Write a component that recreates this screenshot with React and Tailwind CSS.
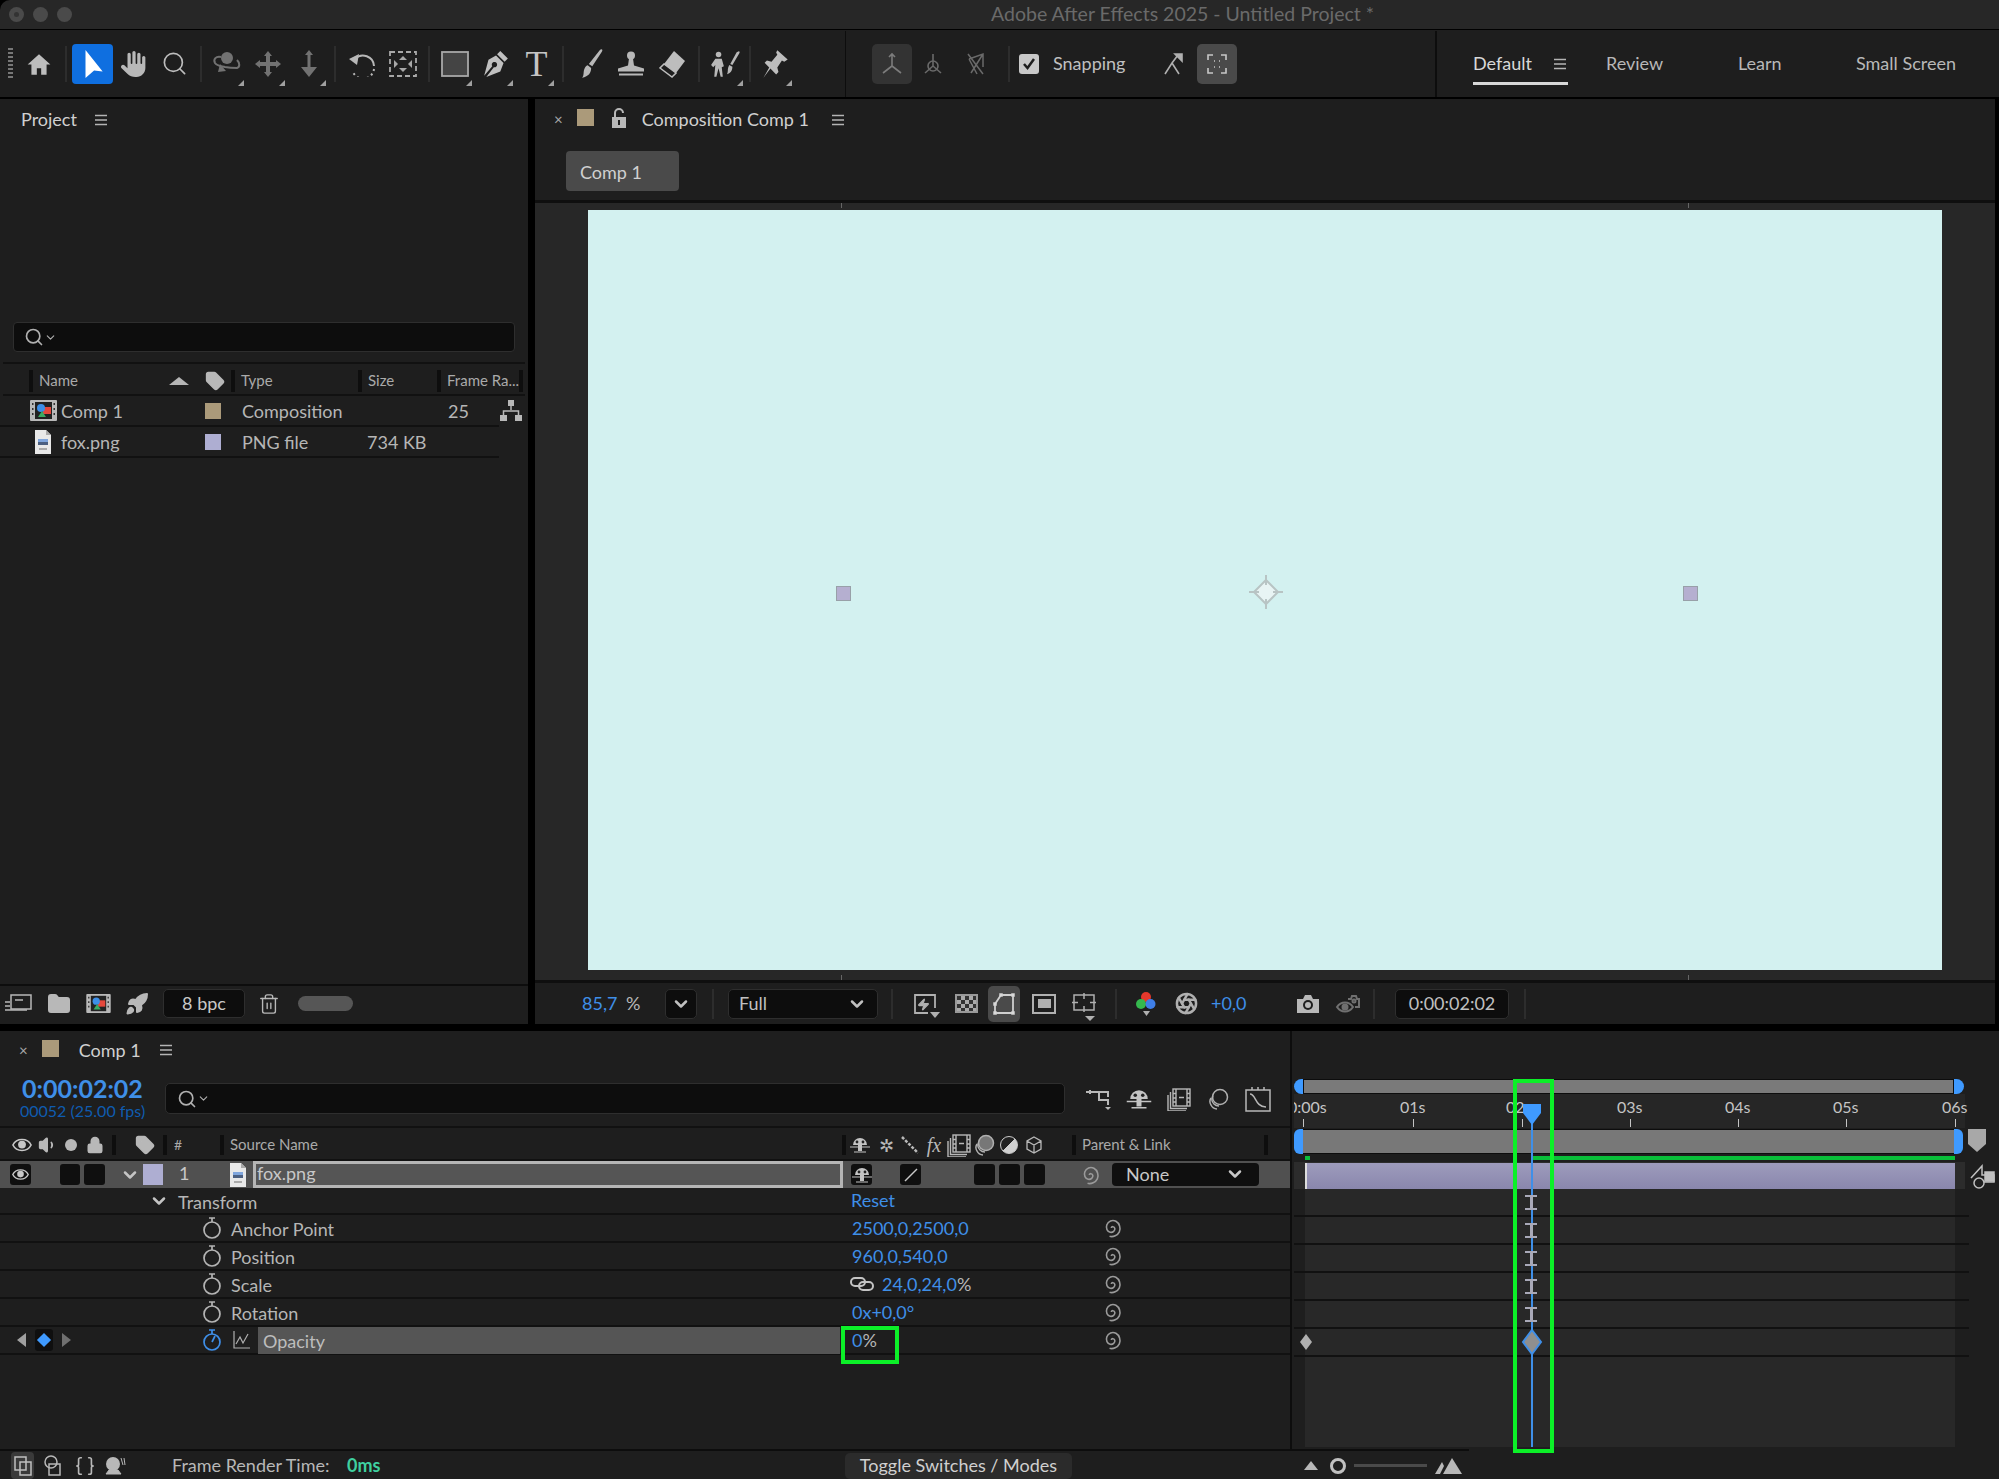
import { Search, ChevronDown, Trash2, Folder, Tag, Volume1, Zap, Rocket, Lock, Braces, Aperture } from "lucide-react";
import { FaHand } from "react-icons/fa6";

const Burger = ({ className = "" }) => (
  <svg width="14" height="12" viewBox="0 0 14 12" className={`shrink-0 ${className}`}>
    <path d="M1 1.5h12M1 6h12M1 10.5h12" stroke="#b4b4b4" strokeWidth="1.4" />
  </svg>
);

const Corner = () => <span className="absolute right-[3px] bottom-[-2px] w-0 h-0 border-l-[6px] border-l-transparent border-b-[6px] border-b-[#a0a0a0]" />;

const Tool = ({ children, corner, w = "w-[41px]" }) => (
  <div className={`relative ${w} h-[40px] flex items-center justify-center shrink-0 text-[#b8b8b8]`}>
    {children}
    {corner && <Corner />}
  </div>
);

const Sep = ({ w = "w-[13px]", h = "h-[36px]", c = "bg-[#2d2d2d]" }) => (
  <div className={`${w} flex justify-center shrink-0`}><div className={`w-[2px] ${h} ${c}`} /></div>
);

const FilmIcon = ({ w = 27, h = 21 }) => (
  <svg width={w} height={h} viewBox="0 0 27 21" className="shrink-0">
    <rect width="27" height="21" fill="#b9b9b9" rx="1" />
    <rect x="5" y="2" width="17" height="17" fill="#222" />
    <path d="M2 3h1.500v2H2zM2 8h1.500v2H2zM2 13h1.500v2H2zM23.500 3H25v2h-1.500zM23.500 8H25v2h-1.500zM23.500 13H25v2h-1.500z" fill="#333" />
    <rect x="13" y="7" width="8" height="7" fill="#e5483c" />
    <circle cx="11" cy="8" r="4" fill="#3d8fe8" />
    <path d="M12 11l4 6H8z" fill="#3cab63" />
  </svg>
);

const FileIcon = () => (
  <svg width="18" height="24" viewBox="0 0 18 24" className="shrink-0">
    <path d="M1 0h11l5 5v19H1z" fill="#e8e8e8" />
    <path d="M12 0l5 5h-5z" fill="#aaa" />
    <rect x="4" y="9" width="10" height="3" fill="#7fa5dc" />
    <rect x="4" y="12" width="10" height="3" fill="#4b5f80" />
    <rect x="5" y="18" width="8" height="2" fill="#aaa" />
  </svg>
);

const Spiral = ({ s = 22, c = "#9a9a9a" }) => (
  <svg width={s} height={s} viewBox="5 3 15 18" fill="none" stroke={c} strokeWidth="1.300" className="shrink-0">
    <path d="M12 12c0-1.500 2.500-1.500 2.800.3s-1.500 3.700-3.800 3.200-3.800-3.300-2.700-6.200 4.500-4.300 7.400-2.800 4.200 5.700 2.800 8.600-5 4.600-8 3.700" />
  </svg>
);

const Stopwatch = ({ active }) => (
  <svg width="20" height="24" viewBox="0 0 20 24" fill="none" stroke={active ? "#3f8fe8" : "#b4b4b4"} strokeWidth="1.700" className="shrink-0">
    <circle cx="10" cy="14" r="8" />
    <path d="M7 2h6M10 2v4" />
    {active && <path d="M10 14l3-6" />}
  </svg>
);

const Shy = () => (
  <svg width="20" height="18" viewBox="0 0 20 18" className="shrink-0">
    <path d="M3 9a7 7 0 0 1 14 0z" fill="#c4c4c4" />
    <circle cx="7" cy="6" r="1.400" fill="#222" /><circle cx="13" cy="6" r="1.400" fill="#222" />
    <rect x="8" y="9" width="4" height="6" fill="#c4c4c4" />
    <path d="M0 11h20M4 16h12" stroke="#c4c4c4" strokeWidth="1.200" />
  </svg>
);

const Layers = ({ fill = "none" }) => (
  <svg width="24" height="24" viewBox="0 0 24 24" fill="none" stroke="#b0b0b0" strokeWidth="1.500" className="shrink-0">
    <path d="M5 11a6.500 6.500 0 0 0 0 7 7 7 0 0 0 6 4" />
    <path d="M7 9a6.500 6.500 0 0 0 1 8 7 7 0 0 0 5 2" />
    <circle cx="14" cy="10" r="7.500" fill={fill} />
  </svg>
);

const FilmStack = () => (
  <svg width="24" height="24" viewBox="0 0 24 24" fill="none" stroke="#b8b8b8" strokeWidth="1.400" className="shrink-0">
    <rect x="6" y="2" width="17" height="17" />
    <path d="M6 6.500h3M6 11h3M6 15h3M20 6.500h3M20 11h3M20 15h3M9 2v17M20 2v17M12 10.500h5" />
    <path d="M3.500 5v16.500H20M1 8v16h18" />
  </svg>
);

const Eyeball = ({ s = 20 }) => (
  <svg width={s} height={s} viewBox="0 0 22 18" className="shrink-0">
    <path d="M1 9c4-8 16-8 20 0-4 8-16 8-20 0z" fill="none" stroke="#c8c8c8" strokeWidth="1.800" />
    <circle cx="11" cy="8.500" r="4.300" fill="#c8c8c8" />
  </svg>
);

const Chain = () => (
  <svg width="24" height="16" viewBox="0 0 24 16" fill="none" stroke="#c4c4c4" strokeWidth="2" className="shrink-0 -ml-[2px]">
    <rect x="1" y="2" width="14" height="8" rx="4" />
    <rect x="9" y="6" width="14" height="8" rx="4" />
  </svg>
);

const TabX = () => <span className="text-[15px] leading-none text-[#a8a8a8]">×</span>;
const Swatch = ({ c, border }) => <div className={`w-[17px] h-[17px] shrink-0 ${c} ${border || ""}`} />;

const Head = ({ w, label, cls = "" }) => (
  <div className={`${w} h-[22px] flex items-center shrink-0 ${cls}`}>
    <div className="w-[4px] h-[22px] bg-[#0e0e0e] mr-[6px] shrink-0" />
    <span className="text-[#aaa] text-[15px] whitespace-nowrap">{label}</span>
  </div>
);

const ProjectRow = ({ icon, name, swatch, type, size, rate, tree }) => (
  <div className="h-[31px] flex items-center border-b-2 border-[#111] w-[499px] relative">
    <div className="w-[27px]" />
    <div className="w-[32px] flex justify-center">{icon}</div>
    <div className="w-[146px] pl-[2px] pt-[2px] text-[18px] text-[#b6b6b6]">{name}</div>
    <div className={`w-[16px] h-[16px] ${swatch}`} />
    <div className="w-[21px]" />
    <div className="w-[125px] pt-[2px] text-[18px] text-[#b6b6b6]">{type}</div>
    <div className="w-[81px] pt-[2px] text-[18px] text-[#b6b6b6]">{size}</div>
    <div className="pt-[2px] text-[18px] text-[#b6b6b6]">{rate}</div>
    {tree && (
      <svg width="22" height="21" viewBox="0 0 22 21" className="absolute left-[500px] top-[4px]">
        <path d="M8 0h6v6H8zM0 15h7v6H0zM15 15h7v6h-7z" fill="#b8b8b8" />
        <path d="M11 6v4M3.500 15v-4h15v4" stroke="#b8b8b8" strokeWidth="1.500" fill="none" />
      </svg>
    )}
  </div>
);

const ViewIcon = ({ children, w = "w-[40px]" }) => <div className={`${w} h-[36px] flex items-center justify-center shrink-0 relative`}>{children}</div>;

const PropRow = ({ name, value, link = true, left, highlight, active }) => (
  <div className="h-[28px] flex items-center border-b-2 border-[#111] shrink-0">
    <div className="w-[201px] flex items-center shrink-0">{left}</div>
    <div className="w-[22px] flex justify-center shrink-0"><Stopwatch active={active} /></div>
    <div className={`flex items-center h-[27px] ${highlight ? "w-[617px]" : "w-[617px] pl-[8px]"} shrink-0`}>
      {highlight ? (
        <>
          <svg width="18" height="20" viewBox="0 0 18 20" fill="none" stroke="#b0b0b0" strokeWidth="1.200" className="ml-[10px] mr-[7px] shrink-0"><path d="M1 1v17h16M3 14l4-7 3 6 5-9" /></svg>
          <div className="bg-[#555] flex-1 h-[27px] flex items-center pl-[5px] pt-[2px] text-[18px] text-[#bdbdbd]">{name}</div>
        </>
      ) : <span className="text-[18px] text-[#b6b6b6] pt-[3px]">{name}</span>}
    </div>
    <div className="w-[261px] pl-[12px] text-[18px] shrink-0 flex items-center">{value}</div>
    {link && <Spiral />}
  </div>
);

const Blue = ({ children }) => <span className="text-[#3f8fe8]">{children}</span>;

const TimeRow = () => <div className="h-[28px] border-b-2 border-[#111] shrink-0 w-[675px]" />;

const Ibeam = ({ top }) => (
  <div className="absolute left-[233px] w-[12px] h-[15px] flex flex-col items-center" style={{ top }}>
    <div className="w-[12px] h-[2px] bg-[#a9a9b8]" />
    <div className="w-[3px] flex-1 bg-[#a9a9b8]" />
    <div className="w-[12px] h-[2px] bg-[#a9a9b8]" />
  </div>
);

const rulerLabels = [
  { label: "01s", left: 103 },
  { label: "03s", left: 320 },
  { label: "04s", left: 428 },
  { label: "05s", left: 536 },
  { label: "06s", left: 645 },
];

export default function App() {
  return (
    <div className="w-[1999px] h-[1479px] bg-black flex flex-col overflow-hidden relative font-['Lato','Liberation_Sans',sans-serif] text-[#c8c8c8]">
      {/* title bar */}
      <div className="h-[29px] bg-[#272727] flex items-center shrink-0 relative rounded-tl-[10px]">
        <div className="flex gap-[9px] pl-[9px]">
          <div className="w-[15px] h-[15px] rounded-full bg-[#4a4a4a] flex items-center justify-center"><div className="w-[5px] h-[5px] rounded-full bg-[#333]" /></div>
          <div className="w-[15px] h-[15px] rounded-full bg-[#4a4a4a]" />
          <div className="w-[15px] h-[15px] rounded-full bg-[#4a4a4a]" />
        </div>
        <div className="ml-[919px] pb-[2px] text-[19.5px] text-[#6a6a6a] whitespace-nowrap">Adobe After Effects 2025 - Untitled Project *</div>
      </div>

      {/* toolbar */}
      <div className="h-[67px] mt-[1px] bg-[#1e1e1e] flex items-center shrink-0">
        <div className="w-[18px] pl-[8px] shrink-0">
          <div className="w-[5px] h-[32px] bg-[repeating-linear-gradient(#777_0_2px,transparent_2px_4px)]" />
        </div>
        <Tool>
          <svg width="26" height="26" viewBox="0 0 24 24" fill="#bdbdbd"><path d="M12 3 1.500 12.500H5V22h5v-6h4v6h5v-9.500h3.500z" /></svg>
        </Tool>
        <Sep />
        <div className="w-[41px] h-[40px] flex items-center justify-center shrink-0 bg-[#0f6fe0] rounded-[4px]">
          <svg width="26" height="30" viewBox="0 0 24 28"><path d="M5 1l16 20-8-1-8 7z" fill="#fff" /></svg>
        </div>
        <Tool><FaHand size={26} color="#b8b8b8" /></Tool>
        <Tool><Search size={27} strokeWidth={1.500} className="text-[#bdbdbd]" /></Tool>
        <Sep w="w-[11px]" />
        <Tool corner>
          <svg width="30" height="28" viewBox="0 0 30 28" fill="none" stroke="#727272" strokeWidth="2">
            <circle cx="15" cy="8" r="6" fill="#727272" stroke="none" />
            <path d="M9 7c-5-1-8 2-6 6 2 3 6 3 10 4 5 1 9 1 12 1 3-1 3-5 0-8" />
            <path d="M8 14l-2 8 8-1z" fill="#727272" stroke="none" />
          </svg>
        </Tool>
        <Tool corner>
          <svg width="26" height="26" viewBox="0 0 26 26" fill="#727272">
            <path d="M13 0l4 5h-8zM13 26l-4-5h8zM0 13l5-4v8zM26 13l-5 4V9z" />
            <path d="M11 5h4v6h6v4h-6v6h-4v-6H5v-4h6z" />
          </svg>
        </Tool>
        <Tool corner>
          <svg width="18" height="28" viewBox="0 0 18 28" fill="#727272">
            <path d="M9 0l4 5H5zM7.500 5h3v15h-3zM1 17h16l-8 10z" />
          </svg>
        </Tool>
        <Sep w="w-[12px]" />
        <Tool>
          <svg width="28" height="26" viewBox="0 0 28 26" fill="none" stroke="#b8b8b8" strokeWidth="2">
            <path d="M7 8a11 11 0 0 1 19 7" />
            <path d="M26 18a11 11 0 0 1-21 3" strokeDasharray="2 3" />
            <path d="M1 8l10-5-2 11z" fill="#b8b8b8" stroke="none" />
          </svg>
        </Tool>
        <Tool>
          <svg width="28" height="26" viewBox="0 0 28 26" fill="#a8a8a8" stroke="none">
            <rect x="1" y="1" width="26" height="24" fill="none" stroke="#a8a8a8" strokeWidth="1.800" strokeDasharray="5 3" />
            <path d="M14 5l4 4h-8zM14 21l4-4h-8zM5 9l4 4-4 4zM23 9l-4 4 4 4z" />
          </svg>
        </Tool>
        <Sep w="w-[11px]" />
        <Tool corner>
          <svg width="28" height="26" viewBox="0 0 28 26"><rect x="1" y="1" width="26" height="24" fill="#444" stroke="#a8a8a8" strokeWidth="1.800" /></svg>
        </Tool>
        <Tool corner>
          <svg width="26" height="28" viewBox="0 0 24 26" fill="#c0c0c0"><path d="M16 1l7 7-3 3-7-7zM12 5l7 7-3 8-13 5 7-9a2.500 2.500 0 1 0-1.500-1L1 24 5 9z" /></svg>
        </Tool>
        <Tool corner><span className="font-['Liberation_Serif',serif] text-[36px] leading-none text-[#c4c4c4]">T</span></Tool>
        <Sep w="w-[12px]" />
        <Tool>
          <svg width="28" height="32" viewBox="0 0 24 28" fill="#b8b8b8"><path d="M22 1c1 0 1 1 .5 2L14 16l-3-2L20.500 2c.5-.6 1-1 1.500-1zM10 15l3 2.500c0 4-2 7.500-8 8.500 2-2 1-5 2-7.500.5-1.500 1.500-3 3-3.500z" /></svg>
        </Tool>
        <Tool>
          <svg width="28" height="28" viewBox="0 0 28 27" fill="#b8b8b8"><circle cx="14" cy="5" r="4" /><path d="M12 8h4l1 7 10 3v3H1v-3l10-3zM2 23h24v2H2z" /></svg>
        </Tool>
        <Tool>
          <svg width="28" height="30" viewBox="0 0 28 28">
            <path d="M16 1l11 10-9 12-12-9z" fill="#bdbdbd" />
            <path d="M6 14l12 9-4 4-12-9z" fill="none" stroke="#bdbdbd" strokeWidth="1.500" />
          </svg>
        </Tool>
        <Sep />
        <Tool corner>
          <svg width="32" height="30" viewBox="0 0 30 28" fill="#b8b8b8">
            <circle cx="8" cy="5" r="2.600" /><path d="M5 9h6l2 7-2 1 1 9h-2l-2-8-2 8H4l1-11-2 2-2-2z" />
            <path d="M27 2c1 0 1 1 .5 2L21 15l-2-1 6-11zM18 15l3 1.500c0 4-2 6-5 7 1-2 .5-4 1-6z" />
          </svg>
        </Tool>
        <Sep w="w-[8px]" />
        <Tool corner>
          <svg width="28" height="30" viewBox="0 0 24 26" fill="#bdbdbd"><path d="M14 1l9 8-3 2-2-1-4 6 1 4-2 2-5-5-6 8 5-9-4-4 2-2 4 1 5-6-1-2z" /></svg>
        </Tool>
        <div className="w-[1px] h-[66px] bg-[#0d0d0d] ml-[50px] shrink-0" />
        {/* axis + snapping */}
        <div className="w-[26px]" />
        <div className="w-[40px] h-[40px] bg-[#333] rounded-[5px] flex items-center justify-center shrink-0">
          <svg width="24" height="24" viewBox="0 0 24 24" fill="none" stroke="#7c7c7c" strokeWidth="1.600"><path d="M12 2v12M12 14l-9 7M12 14l9 7M9 5l3-3 3 3" /></svg>
        </div>
        <div className="w-[42px] flex justify-center shrink-0">
          <svg width="24" height="24" viewBox="0 0 24 24" fill="none" stroke="#6a6a6a" strokeWidth="1.600"><path d="M12 2v12M12 14l-8 7M12 14l8 7" /><circle cx="12" cy="14" r="5" /></svg>
        </div>
        <div className="w-[44px] flex justify-center shrink-0">
          <svg width="22" height="26" viewBox="0 0 22 26" fill="none" stroke="#6a6a6a" strokeWidth="1.500"><path d="M3 3l15 20M18 3L6 22M4 8l14-5v13M4 8l8 15" /></svg>
        </div>
        <div className="w-[2px] h-[36px] bg-[#2d2d2d] ml-[10px] mr-[9px] shrink-0" />
        <div className="w-[20px] h-[20px] bg-[#c8c8c8] rounded-[3px] flex items-center justify-center shrink-0">
          <svg width="14" height="14" viewBox="0 0 14 14" fill="none" stroke="#1e1e1e" strokeWidth="2.500"><path d="M2 7l3.500 4L12 2" /></svg>
        </div>
        <span className="text-[18px] ml-[14px] w-[75px] whitespace-nowrap text-[#c0c0c0]">Snapping</span>
        <svg width="26" height="26" viewBox="0 0 26 26" fill="none" stroke="#b0b0b0" strokeWidth="1.600" className="ml-[33px] shrink-0"><path d="M4 23l7-11 7 11M11 12l6-8" /><path d="M14 3h7v7z" fill="#b0b0b0" /></svg>
        <div className="w-[40px] h-[40px] bg-[#4a4a4a] rounded-[5px] ml-[10px] flex items-center justify-center shrink-0">
          <svg width="20" height="20" viewBox="0 0 20 20" fill="none" stroke="#c8c8c8" strokeWidth="1.600"><path d="M1 6V1h5M14 1h5v5M19 14v5h-5M6 19H1v-5" /><path d="M7 7h1M12 7h1M7 13h1M12 13h1" /></svg>
        </div>
        <div className="w-[2px] h-[66px] bg-[#0d0d0d] ml-[198px] shrink-0" />
        <div className="relative h-[66px] w-[95px] ml-[36px] flex items-center shrink-0">
          <span className="text-[18px] text-[#d8d8d8]">Default</span>
          <Burger className="ml-[21px]" />
          <div className="absolute left-0 right-0 bottom-[12px] h-[3px] bg-[#d8d8d8]" />
        </div>
        <span className="text-[18px] ml-[38px] w-[132px] shrink-0 text-[#b8b8b8]">Review</span>
        <span className="text-[18px] w-[118px] shrink-0 text-[#b8b8b8]">Learn</span>
        <span className="text-[18px] whitespace-nowrap text-[#b8b8b8]">Small Screen</span>
      </div>

      {/* top panels */}
      <div className="h-[925px] mt-[2px] flex shrink-0 gap-[7px]">
        {/* project */}
        <div className="w-[528px] bg-[#1e1e1e] flex flex-col shrink-0 ml-[0px]">
          <div className="h-[43px] flex items-center pl-[21px] pb-[2px] gap-[17px] shrink-0">
            <span className="text-[18px] text-[#d0d0d0]">Project</span>
            <Burger />
          </div>
          <div className="h-[180px]" />
          <div className="mx-[13px] h-[30px] bg-[#0d0d0d] border border-[#2e2e2e] rounded-[4px] flex items-center pl-[10px] shrink-0">
            <Search size={20} className="text-[#b0b0b0]" /><ChevronDown size={13} className="text-[#b0b0b0]" />
          </div>
          <div className="h-[12px] border-b-2 border-[#111] mx-[3px] shrink-0" />
          <div className="h-[32px] pt-[3px] flex items-center border-b-2 border-[#111] mx-[3px] shrink-0 relative">
            <div className="w-[26px]" />
            <Head w="w-[168px]" label="Name" />
            <div className="w-[18px] h-[22px] bg-transparent flex items-center relative">
              <div className="absolute left-[-28px] top-[7px] w-0 h-0 border-l-[10px] border-r-[10px] border-b-[8px] border-l-transparent border-r-transparent border-b-[#b5b5b5]" />
              <div className="w-[4px] h-[22px] bg-[#0e0e0e]" />
              <Tag size={20} fill="#b8b8b8" stroke="#b8b8b8" className="ml-[8px] shrink-0" />
            </div>
            <div className="w-[16px]" />
            <Head w="w-[127px]" label="Type" />
            <Head w="w-[79px]" label="Size" />
            <Head w="w-[82px]" label="Frame Ra..." />
            <div className="w-[4px] h-[22px] bg-[#0e0e0e]" />
          </div>
          <ProjectRow icon={<FilmIcon />} name="Comp 1" swatch="bg-[#ab9a7a]" type="Composition" rate="25" tree />
          <ProjectRow icon={<FileIcon />} name="fox.png" swatch="bg-[#aeaed2]" type="PNG file" size="734 KB" />
          <div className="flex-1" />
          <div className="h-[40px] border-t-2 border-[#0d0d0d] flex items-center pl-[4px] pb-[3px] shrink-0">
            <svg width="28" height="24" viewBox="0 0 28 24" className="shrink-0" fill="none" stroke="#b8b8b8" strokeWidth="1.500"><rect x="7" y="3" width="20" height="14" /><path d="M11 8h8M1 10h5M1 14h5M1 18h22" /></svg>
            <Folder size={24} fill="#b8b8b8" stroke="#b8b8b8" className="ml-[15px] shrink-0" />
            <div className="ml-[15px] shrink-0"><FilmIcon w={25} h={19} /></div>
            <Rocket size={24} fill="#b8b8b8" stroke="#b8b8b8" className="ml-[14px] shrink-0" />
            <div className="ml-[14px] w-[82px] h-[29px] bg-[#0d0d0d] border border-[#2e2e2e] rounded-[5px] flex items-center justify-center text-[18px] text-[#c8c8c8] shrink-0">8 bpc</div>
            <Trash2 size={22} strokeWidth={1.500} className="ml-[13px] text-[#b8b8b8] shrink-0" />
            <div className="ml-[18px] w-[55px] h-[15px] rounded-full bg-[#565656] shrink-0" />
          </div>
        </div>

        {/* composition */}
        <div className="flex-1 bg-[#1e1e1e] flex flex-col mr-[4px] min-w-0">
          <div className="h-[43px] flex items-center pl-[19px] pb-[2px] shrink-0">
            <TabX />
            <div className="ml-[14px] mb-[4px]"><Swatch c="bg-[#ab9a7a]" /></div>
            <svg width="18" height="22" viewBox="0 0 18 22" className="ml-[16px] mb-[4px] shrink-0">
              <path d="M5 10V6a4 4 0 0 1 8 0" fill="none" stroke="#b8b8b8" strokeWidth="2" />
              <rect x="2" y="10" width="14" height="11" fill="#b8b8b8" />
              <rect x="8" y="13" width="2" height="5" fill="#1e1e1e" />
            </svg>
            <span className="ml-[14px] text-[18px] text-[#d0d0d0] whitespace-nowrap">Composition Comp 1</span>
            <Burger className="ml-[22px]" />
          </div>
          <div className="h-[61px] pl-[31px] pt-[9px] shrink-0 border-b-[3px] border-[#0f0f0f]">
            <div className="w-[113px] h-[40px] pt-[2px] bg-[#4a4a4a] rounded-[4px] flex items-center pl-[14px] text-[18px] text-[#d0d0d0]">Comp 1</div>
          </div>
          <div className="flex-1 bg-[#272727] relative flex items-start pt-[7px] pl-[53px] min-h-0">
            <div className="w-[1354px] h-[760px] bg-[#d3f1f0] relative">
              <div className="absolute left-[248px] top-[376px] w-[15px] h-[15px] bg-[#b5afd0] border border-[#98a0a8]" />
              <div className="absolute left-[1095px] top-[376px] w-[15px] h-[15px] bg-[#b5afd0] border border-[#98a0a8]" />
              <svg width="34" height="34" viewBox="0 0 34 34" fill="none" stroke="#b8c4c4" strokeWidth="2" className="absolute left-[661px] top-[365px]">
                <path d="M17 5l12 12-12 12L5 17z" fill="#e8f4f4" /><path d="M17 0v10M17 24v10M0 17h10M24 17h10" />
              </svg>
            </div>
            <div className="absolute left-[306px] top-[0px] w-[1px] h-[5px] bg-[#666]" />
            <div className="absolute left-[1153px] top-[0px] w-[1px] h-[5px] bg-[#666]" />
            <div className="absolute left-[306px] bottom-[0px] w-[1px] h-[5px] bg-[#666]" />
            <div className="absolute left-[1153px] bottom-[0px] w-[1px] h-[5px] bg-[#666]" />
          </div>
          <div className="h-[44px] border-t-[3px] border-[#0f0f0f] flex items-center pl-[47px] shrink-0 text-[18px]">
            <span className="text-[#3f8fe8] w-[44px]">85,7</span>
            <span className="text-[#b8b8b8] w-[39px]">%</span>
            <div className="w-[32px] h-[30px] bg-[#0d0d0d] border border-[#2e2e2e] rounded-[5px] flex items-center justify-center shrink-0"><ChevronDown size={20} strokeWidth={3} className="text-[#c0c0c0]" /></div>
            <Sep w="w-[31px]" h="h-[30px]" />
            <div className="w-[150px] h-[30px] bg-[#0d0d0d] border border-[#2e2e2e] rounded-[5px] flex items-center pl-[10px] pr-[10px] justify-between shrink-0 text-[#c0c0c0]">Full<ChevronDown size={20} strokeWidth={3} /></div>
            <Sep w="w-[27px]" h="h-[30px]" />
            <ViewIcon>
              <svg width="24" height="24" viewBox="0 0 24 24" fill="none" stroke="#b0b0b0" strokeWidth="1.800"><path d="M15 21H2V3h20v13" /></svg>
              <Zap size={13} fill="#b0b0b0" stroke="#b0b0b0" className="absolute left-[12px] top-[12px]" />
              <span className="absolute right-[5px] bottom-[4px] w-0 h-0 border-l-[5px] border-r-[5px] border-t-[6px] border-l-transparent border-r-transparent border-t-[#b0b0b0]" />
            </ViewIcon>
            <ViewIcon w="w-[43px]">
              <div className="w-[23px] h-[19px] border-2 border-[#999] bg-[conic-gradient(#aaa_25%,#333_0_50%,#aaa_0_75%,#333_0)] bg-[length:8px_8px]" />
            </ViewIcon>
            <div className="w-[32px] h-[36px] bg-[#4a4a4a] rounded-[5px] flex items-center justify-center shrink-0">
              <svg width="24" height="24" viewBox="0 0 24 24" fill="#d8d8d8" stroke="#d0d0d0" strokeWidth="1.800">
                <path d="M9 3h12v18H3v-9z" fill="none" />
                <path d="M7.500 1.500h3v3h-3zM19.500 1.500h3v3h-3zM19.500 19.500h3v3h-3zM1.500 19.500h3v3h-3zM1.500 10.500h3v3h-3z" strokeWidth="0.500" />
              </svg>
            </div>
            <ViewIcon w="w-[48px]">
              <div className="w-[24px] h-[20px] border-2 border-[#b0b0b0] flex items-center justify-center"><div className="w-[13px] h-[9px] bg-[#b0b0b0]" /></div>
            </ViewIcon>
            <ViewIcon w="w-[32px]">
              <svg width="24" height="22" viewBox="0 0 24 22" fill="none" stroke="#b0b0b0" strokeWidth="1.500"><rect x="2" y="2" width="20" height="15" /><path d="M12 0v6M12 13v6M0 9.500h6M18 9.500h6" /></svg>
              <span className="absolute right-[5px] bottom-[1px] w-0 h-0 border-l-[5px] border-r-[5px] border-t-[5px] border-l-transparent border-r-transparent border-t-[#b0b0b0]" />
            </ViewIcon>
            <Sep w="w-[31px]" h="h-[30px]" />
            <ViewIcon w="w-[30px]">
              <svg width="20" height="26" viewBox="0 0 20 26"><circle cx="10" cy="6" r="5" fill="#e5382c" /><circle cx="5" cy="13" r="5" fill="#35b84e" /><circle cx="14.500" cy="13" r="5" fill="#3f7fe8" /><path d="M7 20h7l-3.500 5z" fill="#b0b0b0" /></svg>
            </ViewIcon>
            <ViewIcon w="w-[50px]"><Aperture size={23} className="text-[#b0b0b0]" strokeWidth={2.600} /></ViewIcon>
            <span className="text-[#3f8fe8] w-[82px]">+0,0</span>
            <ViewIcon w="w-[30px]">
              <svg width="24" height="20" viewBox="0 0 24 20"><path d="M1 5h6l2-4h6l2 4h6v14H1z" fill="#b8b8b8" /><circle cx="12" cy="11" r="5" fill="#1e1e1e" /><circle cx="12" cy="11" r="3" fill="#b8b8b8" /></svg>
            </ViewIcon>
            <ViewIcon w="w-[50px]">
              <svg width="26" height="26" viewBox="0 0 26 26" fill="none" stroke="#707070" strokeWidth="2"><path d="M2 16c4-6 12-6 16 0-4 6-12 6-16 0z" /><circle cx="10" cy="16" r="2.500" fill="#707070" /><path d="M13 8h3l1-3h4l1 3h2v8h-4" /><circle cx="19" cy="10" r="1.500" /></svg>
            </ViewIcon>
            <div className="w-[2px] h-[30px] bg-[#2d2d2d] shrink-0 mr-[20px]" />
            <div className="w-[114px] h-[30px] bg-[#0d0d0d] border border-[#2e2e2e] rounded-[5px] flex items-center justify-center shrink-0 text-[#c0c0c0]">0:00:02:02</div>
            <div className="w-[2px] h-[30px] bg-[#2d2d2d] shrink-0 ml-[15px]" />
          </div>
        </div>
      </div>

      {/* timeline */}
      <div className="h-[449px] mt-[7px] bg-[#1e1e1e] flex flex-col shrink-0 relative">
        <div className="h-[418px] flex shrink-0">
          {/* layers side */}
          <div className="w-[1292px] flex flex-col shrink-0 border-r-2 border-[#0d0d0d]">
            <div className="h-[42px] flex items-center pl-[19px] pb-[4px] shrink-0">
              <TabX />
              <div className="ml-[14px] mb-[3px]"><Swatch c="bg-[#ab9a7a]" /></div>
              <span className="ml-[20px] text-[18px] text-[#d0d0d0] whitespace-nowrap">Comp 1</span>
              <Burger className="ml-[18px]" />
            </div>
            <div className="h-[55px] flex items-start border-b-2 border-[#111] shrink-0">
              <div className="w-[165px] pl-[22px] pt-[1px] shrink-0">
                <div className="text-[25px] leading-[28px] font-bold text-[#3f8fe8]">0:00:02:02</div>
                <div className="text-[16px] leading-[18px] text-[#0f5cb0] whitespace-nowrap -ml-[2px]">00052 (25.00 fps)</div>
              </div>
              <div className="w-[900px] h-[31px] mt-[10px] bg-[#0d0d0d] border border-[#2e2e2e] rounded-[5px] flex items-center pl-[11px] shrink-0">
                <Search size={20} className="text-[#b0b0b0]" /><ChevronDown size={13} className="text-[#b0b0b0]" />
              </div>
              <div className="flex items-center h-[30px] mt-[11px] pl-[14px]">
                <div className="w-[40px] flex justify-center">
                  <svg width="26" height="26" viewBox="0 0 26 26" fill="none" stroke="#b8b8b8" strokeWidth="2" className="shrink-0"><path d="M0 6h10M10 6h12v5M13 6v8h9v5M4 4v4" /><path d="M19 21h6l-3 3z" fill="#b8b8b8" stroke="none" /></svg>
                </div>
                <div className="w-[40px] flex justify-center"><div className="scale-125"><Shy /></div></div>
                <div className="w-[39px] flex justify-center"><FilmStack /></div>
                <div className="w-[40px] flex justify-center"><Layers /></div>
                <div className="w-[40px] flex justify-center">
                  <svg width="26" height="26" viewBox="0 0 26 26" fill="none" stroke="#b8b8b8" strokeWidth="1.500" className="shrink-0"><rect x="1" y="4" width="24" height="21" /><path d="M5 8c6 0 5 13 16 13M7 1v3M13 1v3M19 1v3" /></svg>
                </div>
              </div>
            </div>
            {/* column heads */}
            <div className="h-[33px] pt-[2px] flex items-center shrink-0 border-b-2 border-[#111]">
              <div className="w-[10px]" />
              <div className="w-[24px] flex justify-center"><Eyeball s={20} /></div>
              <div className="w-[25px] flex justify-center pl-[2px]"><Volume1 size={20} fill="#b8b8b8" stroke="#b8b8b8" /></div>
              <div className="w-[24px] flex justify-center"><div className="w-[12px] h-[12px] rounded-full bg-[#b8b8b8]" /></div>
              <div className="w-[24px] flex justify-center"><Lock size={18} fill="#b8b8b8" stroke="#b8b8b8" /></div>
              <div className="w-[4px] h-[20px] bg-[#0e0e0e] ml-[5px]" />
              <div className="w-[47px] flex justify-center pl-[10px]"><Tag size={20} fill="#b8b8b8" stroke="#b8b8b8" /></div>
              <div className="w-[4px] h-[20px] bg-[#0e0e0e]" />
              <div className="w-[53px] pl-[7px] text-[14px] text-[#aaa]">#</div>
              <div className="w-[4px] h-[20px] bg-[#0e0e0e]" />
              <div className="w-[618px] pl-[6px] text-[15px] text-[#aaa]">Source Name</div>
              <div className="w-[4px] h-[20px] bg-[#0e0e0e]" />
              <div className="w-[28px] flex justify-center"><Shy /></div>
              <div className="w-[24px] flex justify-center text-[18px] leading-none text-[#b8b8b8]">✲</div>
              <div className="w-[24px] flex justify-center"><svg width="18" height="18" viewBox="0 0 18 18" stroke="#b8b8b8" strokeWidth="2.500" strokeDasharray="3 1.500"><path d="M1 1l16 16" /></svg></div>
              <div className="w-[24px] flex justify-center font-['Liberation_Serif',serif] italic text-[20px] leading-none text-[#b8b8b8]">fx</div>
              <div className="w-[25px] flex justify-center"><FilmStack /></div>
              <div className="w-[25px] flex justify-center"><Layers fill="#777" /></div>
              <div className="w-[25px] flex justify-center"><div className="w-[18px] h-[18px] rounded-full bg-[linear-gradient(135deg,#222_50%,#d0d0d0_50%)] border border-[#ccc]" /></div>
              <div className="w-[25px] flex justify-center"><svg width="18" height="18" viewBox="0 0 18 18" fill="none" stroke="#b8b8b8" strokeWidth="1.300"><path d="M9 1l7 4v8l-7 4-7-4V5zM2 5l7 4 7-4M9 9v8" /></svg></div>
              <div className="w-[4px] h-[20px] bg-[#0e0e0e] ml-[26px]" />
              <div className="w-[188px] pl-[6px] text-[15px] text-[#aaa]">Parent &amp; Link</div>
              <div className="w-[4px] h-[20px] bg-[#0e0e0e]" />
            </div>
            {/* layer row */}
            <div className="h-[27px] bg-[#505050] flex items-center shrink-0">
              <div className="w-[10px]" />
              <div className="w-[21px] h-[21px] bg-[#0f0f0f] rounded-[3px] flex items-center justify-center"><Eyeball s={17} /></div>
              <div className="w-[29px]" />
              <div className="w-[20px] h-[21px] bg-[#0f0f0f] rounded-[3px]" />
              <div className="w-[4px]" />
              <div className="w-[21px] h-[21px] bg-[#0f0f0f] rounded-[3px]" />
              <div className="w-[38px] flex justify-center pl-[12px]"><ChevronDown size={20} strokeWidth={3} className="text-[#c4c4c4]" /></div>
              <div className="w-[20px] h-[21px] bg-[#aeaed2]" />
              <div className="w-[16px]" />
              <div className="w-[50px] pb-[2px] text-[18px] text-[#c8c8c8]">1</div>
              <div className="w-[24px]"><FileIcon /></div>
              <div className="w-[590px] h-[27px] border-[3px] border-[#b5b5b5] bg-[#555] flex items-center pl-[1px] pb-[2px] text-[18px] text-[#c8c8c8] shrink-0">fox.png</div>
              <div className="w-[8px]" />
              <div className="w-[21px] h-[21px] bg-[#0f0f0f] rounded-[3px] flex items-center justify-center"><Shy /></div>
              <div className="w-[28px]" />
              <div className="w-[21px] h-[21px] bg-[#0f0f0f] rounded-[3px] flex items-center justify-center"><svg width="16" height="16" viewBox="0 0 16 16" stroke="#c8c8c8" strokeWidth="1.500"><path d="M2 14L14 2" /></svg></div>
              <div className="w-[53px]" />
              <div className="w-[21px] h-[21px] bg-[#0f0f0f] rounded-[3px]" />
              <div className="w-[4px]" />
              <div className="w-[21px] h-[21px] bg-[#0f0f0f] rounded-[3px]" />
              <div className="w-[4px]" />
              <div className="w-[21px] h-[21px] bg-[#0f0f0f] rounded-[3px]" />
              <div className="w-[56px] flex justify-end"><Spiral /></div>
              <div className="w-[11px]" />
              <div className="w-[147px] h-[23px] bg-[#0f0f0f] rounded-[4px] flex items-center justify-between pl-[14px] pr-[14px] pb-[1px] text-[18px] text-[#c8c8c8] shrink-0">None<ChevronDown size={20} strokeWidth={3} /></div>
            </div>
            {/* transform */}
            <div className="h-[27px] flex items-center border-b-2 border-[#111] shrink-0">
              <div className="w-[149px]" />
              <ChevronDown size={20} strokeWidth={3} className="text-[#c4c4c4]" />
              <span className="ml-[9px] pt-[3px] text-[18px] text-[#b6b6b6] w-[673px]">Transform</span>
              <span className="text-[18px] text-[#3f8fe8]">Reset</span>
            </div>
            <PropRow name="Anchor Point" value={<Blue>2500,0,2500,0</Blue>} />
            <PropRow name="Position" value={<Blue>960,0,540,0</Blue>} />
            <PropRow name="Scale" value={<><Chain /><span className="ml-[8px]"><Blue>24,0,24,0</Blue><span className="text-[#b6b6b6]">%</span></span></>} />
            <PropRow name="Rotation" value={<Blue>0x+0,0°</Blue>} />
            <PropRow
              name="Opacity"
              highlight
              active
              value={<><Blue>0</Blue><span className="text-[#b6b6b6]">%</span></>}
              left={
                <div className="flex items-center pl-[17px] gap-[9px]">
                  <span className="w-0 h-0 border-t-[7px] border-b-[7px] border-r-[9px] border-t-transparent border-b-transparent border-r-[#a0a0a0]" />
                  <span className="w-[18px] h-[22px] bg-[#0f0f0f] rounded-[3px] flex items-center justify-center">
                    <span className="w-[10px] h-[10px] rotate-45 bg-[#3f9aff]" />
                  </span>
                  <span className="w-0 h-0 border-t-[7px] border-b-[7px] border-l-[9px] border-t-transparent border-b-transparent border-l-[#707070]" />
                </div>
              }
            />
          </div>

          {/* time graph side */}
          <div className="flex-1 relative flex flex-col pl-[2px] min-w-0">
            <div className="h-[48px] shrink-0" />
            <div className="h-[15px] flex items-stretch shrink-0">
              <div className="w-[9px] bg-[#3f9aff] rounded-l-full shrink-0" />
              <div className="w-[651px] bg-[#7a7a7a] border border-[#0d0d0d]" />
              <div className="w-[10px] bg-[#3f9aff] rounded-r-full shrink-0" />
            </div>
            <div className="h-[34px] bg-[#262626] w-[671px] relative shrink-0">
              <div className="absolute left-[0px] top-[1px] w-[50px] overflow-hidden">
                <span className="block -ml-[6px] whitespace-nowrap text-[16px] text-[#c4c4c4]">0:00s</span>
              </div>
              <span className="absolute left-[9px] top-[25px] w-[1px] h-[8px] bg-[#c4c4c4]" />
              {rulerLabels.map((r) => (
                <div key={r.label}>
                  <span className="absolute top-[1px] text-[16px] text-[#c4c4c4]" style={{ left: r.left + 3 }}>{r.label}</span>
                  <span className="absolute top-[25px] w-[1px] h-[8px] bg-[#c4c4c4]" style={{ left: r.left + 16 }} />
                </div>
              ))}
              <span className="absolute left-[212px] top-[1px] text-[16px] text-[#c4c4c4]">02</span>
              <span className="absolute left-[228px] top-[25px] w-[1px] h-[8px] bg-[#c4c4c4]" />
            </div>
            <div className="h-[25px] flex items-stretch shrink-0 mt-[1px]">
              <div className="w-[9px] bg-[#3f9aff] rounded-l-[6px] shrink-0" />
              <div className="w-[651px] bg-[#787878] border-y border-[#0d0d0d]" />
              <div className="w-[9px] bg-[#3f9aff] rounded-r-[6px] shrink-0" />
              <svg width="18" height="24" viewBox="0 0 18 24" className="ml-[5px] shrink-0"><path d="M0 0h18v15l-9 8-9-8z" fill="#a8a8a8" /></svg>
            </div>
            <div className="h-[8px] flex items-center pl-[11px] shrink-0">
              <div className="w-[5px] h-[4px] bg-[#0abf3a]" />
              <div className="ml-[222px] w-[423px] h-[4px] bg-[#0abf3a]" />
            </div>
            <div className="h-[27px] flex items-center shrink-0 bg-[#2c2c2c] w-[671px] pl-[11px] relative">
              <div className="w-[650px] h-[26px] bg-[linear-gradient(180deg,#9d9bbc,#8a87ad)] border-l-2 border-[#ddd]" />
              <svg width="26" height="26" viewBox="0 0 26 26" fill="none" stroke="#c0c0c0" strokeWidth="1.500" className="absolute left-[676px] top-[1px]">
                <path d="M1 15L12 3v9h12v7H14" fill="none" /><circle cx="9" cy="20" r="5" /><rect x="15" y="9" width="9" height="9" fill="#c0c0c0" />
              </svg>
            </div>
            <div className="flex-1 flex flex-col bg-[#1e1e1e] relative">
              <div className="absolute left-[11px] top-0 bottom-[2px] w-[650px] bg-[#282828]" />
              {[0, 1, 2, 3, 4, 5].map((i) => (
                <div key={i} className="relative"><TimeRow /></div>
              ))}
            </div>
            {/* keyframes + playhead on the time canvas */}
            <div className="absolute left-[239px] top-[73px] bottom-[2px] w-[2px] bg-[#3f8fe8]" />
            <svg width="18" height="22" viewBox="0 0 18 22" className="absolute left-[231px] top-[73px]"><path d="M0 0h18v9l-9 12-9-12z" fill="#3f9aff" /></svg>
            <Ibeam top={164} />
            <Ibeam top={192} />
            <Ibeam top={220} />
            <Ibeam top={248} />
            <Ibeam top={276} />
            <svg width="16" height="16" viewBox="0 0 16 16" className="absolute left-[6px] top-[303px]"><path d="M8 0l6 8-6 8-6-8z" fill="#b0b0b0" /></svg>
            <svg width="24" height="26" viewBox="0 0 24 26" className="absolute left-[228px] top-[298px]"><path d="M12 1l9 12-9 12-9-12z" fill="#8f8f8f" stroke="#3f8fe8" strokeWidth="2" /></svg>
          </div>
        </div>

        {/* status bar */}
        <div className="w-[1469px] h-[2px] bg-[#0d0d0d] shrink-0" />
        <div className="flex-1 flex items-center pl-[11px]">
          <div className="w-[23px] h-[27px] bg-[#3a3a3a] rounded-[4px] flex items-center justify-center shrink-0">
            <svg width="18" height="20" viewBox="0 0 18 20" fill="none" stroke="#c0c0c0" strokeWidth="1.500"><rect x="1" y="1" width="11" height="13" /><rect x="6" y="6" width="11" height="13" /></svg>
          </div>
          <svg width="20" height="24" viewBox="0 0 20 24" fill="none" stroke="#b8b8b8" strokeWidth="1.500" className="ml-[9px] shrink-0"><circle cx="8" cy="8" r="6" /><rect x="6" y="10" width="11" height="11" /></svg>
          <Braces size={22} strokeWidth={1.800} className="ml-[11px] text-[#b8b8b8] shrink-0" />
          <svg width="22" height="22" viewBox="0 0 22 22" fill="#b8b8b8" className="ml-[8px] shrink-0"><circle cx="9" cy="9" r="7" /><path d="M5 15h9l3 4H2zM17 3l2 7M20 3l1 7" stroke="#b8b8b8" /></svg>
          <span className="ml-[46px] w-[175px] text-[18px] text-[#b8b8b8] shrink-0 whitespace-nowrap">Frame Render Time:</span>
          <span className="text-[18px] font-bold text-[#3fd0a0] w-[498px] shrink-0">0ms</span>
          <div className="w-[227px] h-[26px] bg-[#2b2b2b] rounded-[5px] flex items-center justify-center text-[18px] text-[#d0d0d0] shrink-0 whitespace-nowrap">Toggle Switches / Modes</div>
          <span className="ml-[232px] w-0 h-0 border-l-[7px] border-r-[7px] border-b-[9px] border-l-transparent border-r-transparent border-b-[#b8b8b8] shrink-0" />
          <div className="ml-[12px] w-[16px] h-[16px] border-[3px] border-[#c0c0c0] rounded-full shrink-0" />
          <div className="ml-[8px] w-[73px] h-[3px] bg-[#4a4a4a] shrink-0" />
          <svg width="28" height="16" viewBox="0 0 28 16" fill="#b8b8b8" className="ml-[8px] shrink-0"><path d="M0 16L7 4l2 4-4 8zM8 16l9-16 10 16z" /></svg>
        </div>

        {/* callout boxes drawn over the screenshot */}
        <div className="absolute left-[841px] top-[295px] w-[58px] h-[38px] border-4 border-[#0cf028]" />
        <div className="absolute left-[1513px] top-[48px] w-[41px] h-[374px] border-4 border-[#0cf028]" />
      </div>
    </div>
  );
}
